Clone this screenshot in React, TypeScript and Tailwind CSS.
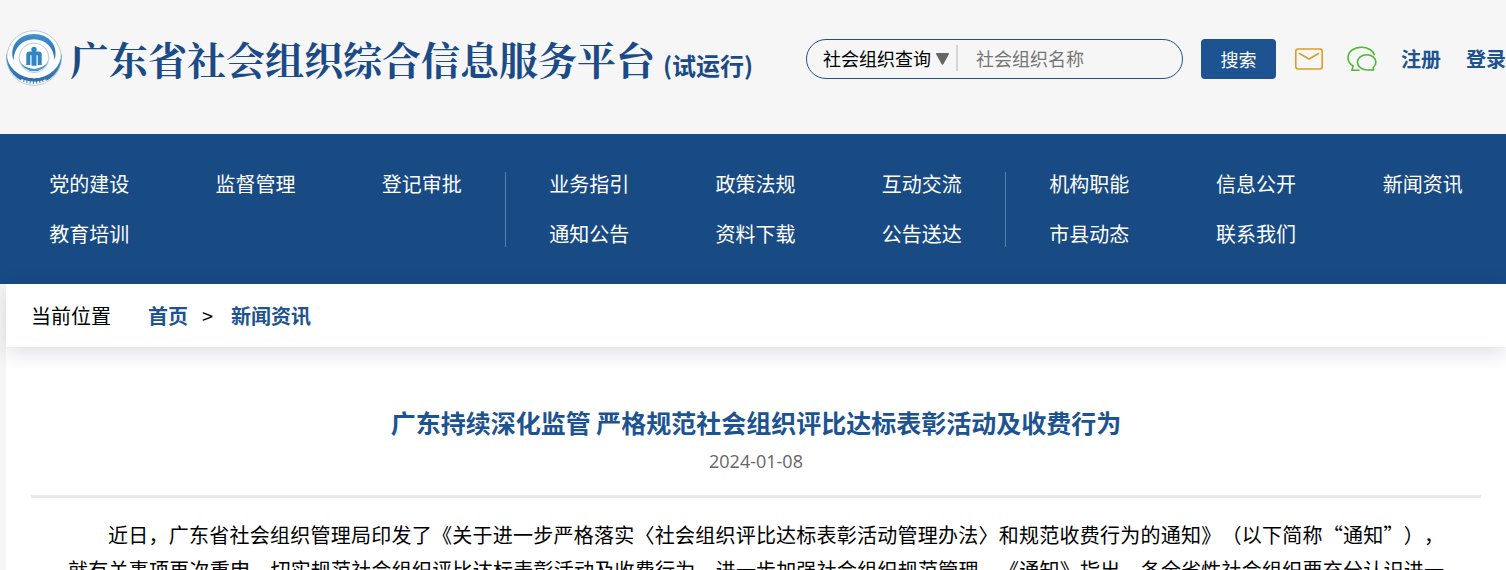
const navGroups = [
    ['党的建设', '监督管理', '登记审批', '教育培训'],
    ['业务指引', '政策法规', '互动交流', '通知公告', '资料下载', '公告送达'],
    ['机构职能', '信息公开', '新闻资讯', '市县动态', '联系我们'],
]

const Emblem = () => {
    return (
        <svg viewBox="0 0 56 56" className="size-14 shrink-0" aria-hidden="true">
            <defs>
                <linearGradient id="ring" x1="0" y1="0" x2="0" y2="1">
                    <stop offset="0" stopColor="#3f92cf" />
                    <stop offset="1" stopColor="#2a69ab" />
                </linearGradient>
            </defs>
            <circle cx="28" cy="28" r="27.3" fill="#fbfcfd" stroke="#a9bccb" strokeWidth=".8" />
            <path d="M.6 23a27.6 27.6 0 1 0 54.800 0A27.400 25.200 0 0 1 .6 23Z" fill="url(#ring)" />
            <circle cx="28" cy="25.500" r="22.800" fill="#fbfcfd" />
            <path d="M7.500 30C3 16 13 4 28 4s25 12 20.500 26C48 17.500 39.500 9.200 28 9.200S8 17.500 7.500 30Z" fill="url(#ring)" />
            <circle cx="28" cy="27.800" r="14.800" fill="#fff" stroke="#a9bccb" strokeWidth=".8" />
            <path d="M13.800 30.500a14.500 13.500 0 0 0 28.400 0a14.500 10 0 0 1-28.400 0Z" fill="#4596d2" />
            <circle cx="28" cy="27" r="11.800" fill="#fff" />
            <circle cx="28" cy="19.500" r="2.700" fill="#3184c6" />
            <path
                d="M20.300 35V24.500q0-3 3-3h9.400q3 0 3 3V35h-4V25.200h-1.200v10.600h-5V25.200h-1.200V35Z"
                fill="#3184c6"
            />
            <path d="M15 50.300q13 5.500 26 0" fill="none" stroke="#f4f8fb" strokeWidth="3" strokeDasharray="2.400 .9" />
        </svg>
    )
}

const MailIcon = () => {
    return (
        <svg viewBox="0 0 28 22" className="h-[22px] w-7" fill="none" stroke="#d99e25" strokeWidth="1.6">
            <rect x=".8" y="1" width="26.4" height="20" rx="2.4" />
            <path d="M4.5 5.5 14 11l9.5-5.5" strokeLinecap="round" />
        </svg>
    )
}

const WechatIcon = () => {
    return (
        <svg viewBox="0 0 30 26" className="h-[26px] w-[30px]" fill="none" stroke="#4db82e" strokeWidth="1.600" strokeLinejoin="round">
            <path d="M12.500 24.200H5l1-4.300C2.800 17.800 1 15 1 11.700 1 5.800 7 1.200 14.500 1.200c6.400 0 11.700 3.400 13 8.100" />
            <path d="M26.200 21.500c1.700-1.400 2.700-3.200 2.700-5.200 0-4.300-4.200-7.500-9.200-7.500s-9.200 3.300-9.200 7.500 4.200 7.700 9.200 7.700h6.900Z" />
        </svg>
    )
}

const Header = () => {
    return (
        <header className="flex h-[134px] items-start justify-between bg-[#f6f6f6] pl-[6px]">
            <h1 className="mt-[30px] flex shrink-0 items-center gap-2 whitespace-nowrap font-bold text-[#1a4b87]">
                <Emblem />
                <span className="flex items-baseline gap-2">
                    <span className="font-['Noto_Serif_CJK_SC','Noto_Sans_CJK_SC',serif] text-[39px] leading-[54px]">
                        广东省社会组织综合信息服务平台
                    </span>
                    <span className="text-[24px]">(试运行)</span>
                </span>
            </h1>
            <div className="mt-[39px] flex h-10 shrink-0 items-center">
                <form className="flex items-center gap-[18px]">
                    <div className="flex h-10 w-[377px] items-center rounded-full border border-[#1c5390] pb-[2px] pl-4">
                        <div className="relative">
                            <select
                                aria-label="查询类型"
                                className="w-[126px] appearance-none bg-transparent text-[18px] text-black"
                            >
                                <option>社会组织查询</option>
                            </select>
                            <svg viewBox="0 0 13 12" className="pointer-events-none absolute top-2 right-0 h-3 w-[13px]">
                                <path d="M1 0h11q1.500 0 .7 1.500L7.500 11q-1 1.500-2 0L.3 1.500Q-.5 0 1 0Z" fill="#666" />
                            </svg>
                        </div>
                        <span className="ml-[7px] h-[26px] w-[2px] bg-[#d5d5d5]" />
                        <input
                            type="text"
                            aria-label="社会组织名称"
                            placeholder="社会组织名称"
                            className="ml-[18px] w-44 min-w-0 bg-transparent text-[18px] placeholder:text-[#757575]"
                        />
                    </div>
                    <button type="button" className="h-10 w-[75px] rounded bg-[#1c5390] text-[18px] text-white">
                        搜索
                    </button>
                </form>
                <a href="#mail" aria-label="邮箱" className="ml-[19px]">
                    <MailIcon />
                </a>
                <a href="#wechat" aria-label="微信" className="ml-6">
                    <WechatIcon />
                </a>
                <a href="#register" className="ml-6 text-[20px] font-bold text-[#1c5390]">
                    注册
                </a>
                <a href="#login" className="ml-[25px] text-[20px] font-bold text-[#1c5390]">
                    登录
                </a>
            </div>
        </header>
    )
}

const Nav = () => {
    return (
        <nav className="bg-[#184a84] pt-[38px] pb-[37px] pl-[6px]">
            <div className="grid grid-cols-3">
                {navGroups.map((group, index) => (
                    <ul
                        key={index}
                        className={`grid h-[75px] grid-cols-3 content-start ${index < navGroups.length - 1 ? 'border-r border-[#5b7fa9]' : ''}`}
                    >
                        {group.map((item) => (
                            <li key={item} className="h-[50px] text-center text-[20px] leading-6 text-white">
                                <a href="#nav">{item}</a>
                            </li>
                        ))}
                    </ul>
                ))}
            </div>
        </nav>
    )
}

const App = () => {
    return (
        <div
            lang="zh-CN"
            className="h-screen overflow-hidden bg-[#f6f6f6] font-['Noto_Sans_CJK_SC',sans-serif] text-black"
        >
            <Header />
            <Nav />
            <main className="ml-[6px] min-h-full bg-white">
                <div className="flex h-[63px] items-center px-[25px] text-[20px] shadow-[0_5px_20px_rgba(20,30,60,0.15)]">
                    <span>当前位置</span>
                    <a href="#home" className="ml-[37px] font-bold text-[#1c5390]">
                        首页
                    </a>
                    <span className="mx-[14px]">&gt;</span>
                    <a href="#news" className="ml-1 font-bold text-[#1c5390]">
                        新闻资讯
                    </a>
                </div>
                <article className="px-[25px] pt-[57px]">
                    <h2 className="text-center text-[25px] leading-9 font-bold text-[#1c5390]">
                        广东持续深化监管 严格规范社会组织评比达标表彰活动及收费行为
                    </h2>
                    <p className="mt-[5px] border-b-3 border-[#e9e9e9] pb-[18px] text-center font-['Open_Sans',sans-serif] text-[18px] leading-8 text-[#666]">
                        2024-01-08
                    </p>
                    <p className="mt-[19px] px-[37px] indent-10 text-[20px] leading-[35px] text-justify [text-align-last:justify] [text-spacing-trim:space-all]">
                        近日，广东省社会组织管理局印发了《关于进一步严格落实〈社会组织评比达标表彰活动管理办法〉和规范收费行为的通知》（以下简称“通知”），就有关事项再次重申，切实规范社会组织评比达标表彰活动及收费行为，进一步加强社会组织规范管理。《通知》指出，各全省性社会组织要充分认识进一
                    </p>
                </article>
            </main>
        </div>
    )
}

export default App
